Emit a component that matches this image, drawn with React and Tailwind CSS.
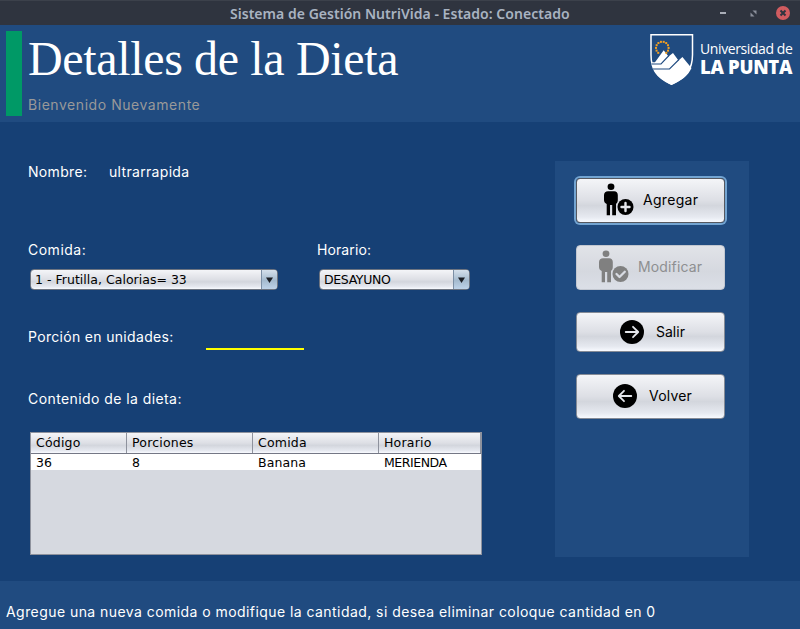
import React from "react";

const BODY = "font-['Inter',sans-serif] text-sm whitespace-nowrap";
const METAL = "bg-[linear-gradient(180deg,#f4f5f8_0%,#dddfe5_50%,#d3d6dd_62%,#e6e9f0_88%,#f8faff_100%)]";

function PersonIcon({ kind }) {
  return (
    <svg width="32" height="34" viewBox="0 0 32 34" className="shrink-0">
      <g fill="currentColor">
        <ellipse cx="8" cy="3.700" rx="3.400" ry="3.200" />
        <path d="M5 8.200h6.200c2.200 0 3.600 1.600 3.600 3.700v5.100c0 2-.6 3-1.800 3.800v11.400H9.200V22H7v10.200H3.700V21C2 20 1 19 1 17v-5.100C1 9.800 2.800 8.200 5 8.200z" />
        <circle cx="22.500" cy="24" r="8" />
      </g>
      {kind === "plus" ? (
        <path d="M22.500 20v8M18.500 24h8" stroke="#e4e6eb" strokeWidth="2.400" strokeLinecap="round" />
      ) : (
        <path d="M18.500 24l3 3 5.300-5.200" fill="none" stroke="#d8dbe2" strokeWidth="2.300" strokeLinecap="round" strokeLinejoin="round" />
      )}
    </svg>
  );
}

function ArrowIcon({ left }) {
  return (
    <svg width="24" height="24" viewBox="0 0 24 24" className="shrink-0">
      <circle cx="12" cy="12" r="12" />
      <path
        d={left ? "M18.300 12H6M11 6.800L5.800 12l5.200 5.200" : "M5.700 12H18M13 6.800l5.200 5.200-5.200 5.200"}
        fill="none" stroke="#e4e6eb" strokeWidth="1.800" strokeLinecap="round" strokeLinejoin="round"
      />
    </svg>
  );
}

function Crest() {
  const dots = Array.from({ length: 12 }, (_, i) => {
    const a = ((130 + i * 25.500) * Math.PI) / 180;
    return [12.300 + 6.300 * Math.cos(a), 14 + 6.300 * Math.sin(a)];
  });
  return (
    <svg width="44" height="52" viewBox="0 0 44 52" className="shrink-0">
      <path d="M1 .8h41.500v20c0 14-6 23-21 29.500C6.500 43.800 1 34.800 1 20.800z" fill="none" stroke="#fff" strokeWidth="1.500" />
      <path d="M2 28.300h3L13.700 16.300l4.800 6.200 4.500-3.500 5.500 7.500 3.900-3.500L41.500 34C38 42 31 46.800 21.500 50.800 12 46.500 6 41 3 34.500z" fill="#fff" />
      <path d="M1.500 30h9.500L19 21.500M3 35h16.500L29 25.500" fill="none" stroke="#204b80" strokeWidth="1.100" />
      {dots.map(([x, y], i) => (
        <rect key={i} x={x - 1} y={y - 1} width="2" height="2" fill="#f5a020" />
      ))}
    </svg>
  );
}

function Combo({ className, text, textClass }) {
  return (
    <div className={`flex h-[21px] overflow-hidden rounded-[4px] border border-[#6d7480] ${METAL} ${className}`}>
      <span className={`flex-1 whitespace-nowrap pl-1 font-['DejaVu_Sans',sans-serif] text-[12.500px] leading-[19px] text-black ${textClass}`}>{text}</span>
      <span className="flex w-4 items-center justify-center border-l border-[#7c8fa5] bg-[linear-gradient(180deg,#d5e0eb,#a4bace_55%,#bed3e9)]">
        <svg width="7" height="6" viewBox="0 0 7 6"><path d="M0 .5h7L3.500 6z" fill="#1c1f25" /></svg>
      </span>
    </div>
  );
}

function Button({ className, children }) {
  return (
    <button className={`flex w-[149px] items-center rounded-[4px] ${BODY} ${className}`}>{children}</button>
  );
}

const HEAD = "border-r border-[#8e929d] pl-[5px]";

export default function App() {
  return (
    <div className="flex h-[629px] w-[800px] flex-col overflow-hidden bg-[#164075] text-white">
      <div className="flex h-[25px] items-center border-t border-[#3c414b] bg-[#2f343f] pl-[230px] pr-[10px] pt-px">
        <span className="w-[340px] whitespace-nowrap font-['Noto_Sans',sans-serif] text-[14px] font-semibold leading-6 tracking-[0.030px] text-[#a9b3c1]">
          Sistema de Gestión NutriVida - Estado: Conectado
        </span>
        <svg width="72" height="16" viewBox="0 0 72 16" className="ml-auto -translate-y-px">
          <path d="M2 7h6v2H2z" fill="#a9adb7" />
          <path d="M34.500 5.500h4v4zM32.500 7.500v4h4z" fill="#8b909c" />
          <circle cx="65" cy="8" r="7" fill="#d15c60" />
          <path d="M62.500 5.500l5 5M67.500 5.500l-5 5" stroke="#2f343f" strokeWidth="2" />
        </svg>
      </div>

      <header className="flex h-[97px] shrink-0 bg-[#204b80] pl-[6px] pt-[6px]">
        <div className="h-[85px] w-4 bg-[#009966]" />
        <div className="ml-[6px] flex flex-col">
          <h1 className="whitespace-nowrap font-['Liberation_Serif',serif] text-[48px] leading-[56px] tracking-[-0.350px]">Detalles de la Dieta</h1>
          <p className={`mt-2 leading-5 tracking-[0.550px] text-[#999999] ${BODY}`}>Bienvenido Nuevamente</p>
        </div>
        <div className="ml-auto mr-[7px] mt-[3px] flex">
          <Crest />
          <div className="ml-[6px] w-[93px] whitespace-nowrap pt-[6px] font-['Open_Sans',sans-serif]">
            <div className="text-[14px] leading-[18px] tracking-[-0.400px]">Universidad de</div>
            <div className="text-[18.500px] font-extrabold leading-[18px] tracking-[-0.300px]">LA PUNTA</div>
          </div>
        </div>
      </header>

      <main className="flex h-[459px] shrink-0">
        <section className="w-[555px] pl-7">
          <div className={`flex pt-10 leading-5 tracking-[0.320px] ${BODY}`}>
            <span className="w-[81px]">Nombre:</span>
            <span>ultrarrapida</span>
          </div>
          <div className={`mt-[58px] flex leading-5 ${BODY}`}>
            <span className="w-[289px] tracking-[0.500px]">Comida:</span>
            <span className="tracking-[0.100px]">Horario:</span>
          </div>
          <div className="mt-[9px] flex pl-[2px]">
            <Combo className="w-[248px]" text="1 - Frutilla, Calorias= 33" textClass="tracking-[0.020px]" />
            <Combo className="ml-[41px] w-[151px]" text="DESAYUNO" textClass="tracking-[-0.350px]" />
          </div>
          <div className={`mt-[37px] flex leading-5 ${BODY}`}>
            <span className="w-[178px] tracking-[0.320px]">Porción en unidades:</span>
            <span className="h-[23px] w-[98px] border-b-2 border-[#ffff00]" />
          </div>
          <div className={`mt-[39px] leading-5 tracking-[0.420px] ${BODY}`}>Contenido de la dieta:</div>
          <div className="ml-[2px] mt-[23px] h-[123px] w-[452px] border border-[#8e929d] bg-[#d6d9e0] font-['DejaVu_Sans',sans-serif] text-[12.500px] text-black">
            <div className={`grid h-[21px] grid-cols-[96px_126px_126px_102px] border-b border-[#747785] leading-[20px] tracking-[0.200px] ${METAL}`}>
              <span className={HEAD}>Código</span>
              <span className={HEAD}>Porciones</span>
              <span className={HEAD}>Comida</span>
              <span className={HEAD}>Horario</span>
            </div>
            <div className="grid h-4 grid-cols-[96px_126px_126px_102px] bg-white leading-[18px]">
              <span className="pl-[5px]">36</span>
              <span className="pl-[5px]">8</span>
              <span className="pl-[5px] tracking-[0.100px]">Banana</span>
              <span className="pl-[5px] tracking-[-0.450px]">MERIENDA</span>
            </div>
          </div>
        </section>

        <aside className="mt-[39px] flex h-[396px] w-[194px] flex-col bg-[#204b80] pl-[21px] pt-[17px] text-black">
          <Button className={`h-[45px] border border-[#55585f] pb-px pl-[26px] tracking-[0.300px] ring-2 ring-[#73a4d1] ${METAL}`}>
            <PersonIcon kind="plus" /><span className="ml-[8px]">Agregar</span>
          </Button>
          <Button className="mt-[22px] h-[45px] border border-[#c2c7d0] bg-[linear-gradient(180deg,#e1e3e8,#d5d8df_60%,#dbdfe7)] pb-px pl-[21px] tracking-[0.150px] text-[#8e8f91]">
            <span className="text-[#808080]"><PersonIcon kind="check" /></span><span className="ml-[8px]">Modificar</span>
          </Button>
          <Button className={`mt-[22px] h-[40px] border border-[#858b96] pl-[43px] ${METAL}`}>
            <ArrowIcon /><span className="ml-[12px]">Salir</span>
          </Button>
          <Button className={`mt-[22px] h-[45px] border border-[#858b96] pb-[2px] pl-[36px] tracking-[0.200px] ${METAL}`}>
            <ArrowIcon left /><span className="ml-[12px]">Volver</span>
          </Button>
        </aside>
      </main>

      <footer className="h-12 shrink-0 bg-[#204b80] pl-[6px] pt-[21px]">
        <p className={`leading-5 tracking-[0.440px] ${BODY}`}>
          Agregue una nueva comida o modifique la cantidad, si desea eliminar coloque cantidad en 0
        </p>
      </footer>
    </div>
  );
}
